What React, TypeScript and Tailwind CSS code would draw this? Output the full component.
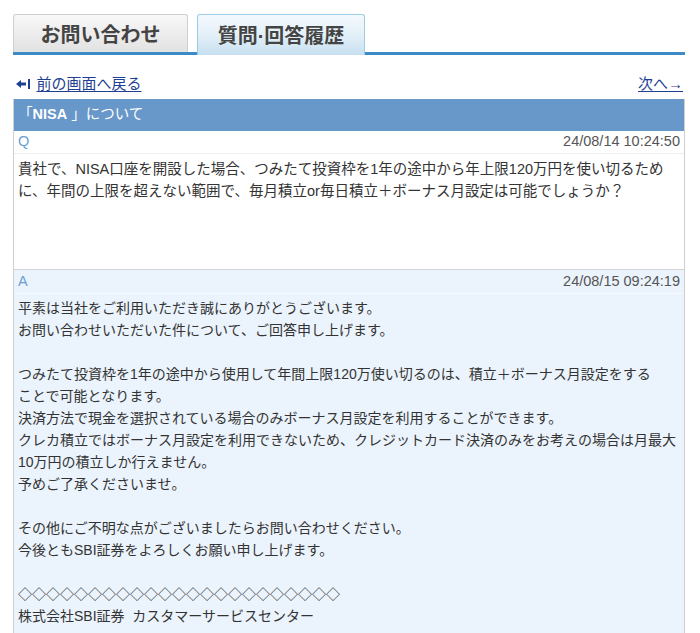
import { ReactNode } from 'react';

const font = "font-['Liberation_Sans','Noto_Sans_CJK_JP',sans-serif]";

function Tab({ label, active }: { label: string; active?: boolean }) {
  return active ? (
    <div className="relative z-10 -mb-[3px] ml-[9px] flex h-[41px] w-[168px] items-center justify-center rounded-t-[3px] border border-b-0 border-[#9ccbe6] bg-gradient-to-b from-[#f4f9fd] via-[#e3f0f8] to-[#c6dff0] pt-[2px] text-[20px] font-bold text-[#444]">
      {label}
    </div>
  ) : (
    <div className="flex h-[38px] w-[175px] items-center justify-center rounded-t-[3px] border border-b-0 border-[#cfcfcf] bg-gradient-to-b from-[#f8f8f8] to-[#e2e2e2] pt-[2px] text-[20px] font-bold text-[#444]">
      {label}
    </div>
  );
}

function Lines({ children }: { children: ReactNode }) {
  return <div className="whitespace-nowrap leading-[22px]">{children}</div>;
}

export default function App() {
  return (
    <div className={`${font} h-[633px] w-[700px] overflow-hidden bg-white text-[#333]`}>
      {/* Tabs */}
      <div className="ml-[13px] mr-[15px] mt-[14px] flex items-end border-b-[3px] border-[#3c8ac6]">
        <Tab label="お問い合わせ" />
        <Tab label="質問·回答履歴" active />
      </div>

      {/* Nav */}
      <div className="ml-[16px] mr-[17px] mt-[20px] flex items-center justify-between text-[15px] leading-[18px] text-[#1f3f94]">
        <a className="flex items-center gap-[7px]">
          <span className="flex items-center">
            <svg width="10" height="10" viewBox="0 0 10 10">
              <path d="M0 5 L5 1 L5 3.6 L10 3.6 L10 6.4 L5 6.4 L5 9 Z" fill="#1f3f94" />
            </svg>
            <span className="ml-[2px] h-[10px] w-[1.5px] bg-[#1f3f94]" />
          </span>
          <span className="underline underline-offset-2">前の画面へ戻る</span>
        </a>
        <a className="underline underline-offset-2">次へ→</a>
      </div>

      {/* Table */}
      <div className="ml-[13px] mr-[15px] mt-[6px] border-x border-[#cfcfcf]">
        <div className="flex h-[32px] items-center bg-[#6897c9] px-[4px] text-[14.5px] text-white">
          「<span className="font-bold">NISA</span>&nbsp;」について
        </div>

        {/* Q */}
        <div className="flex h-[23px] items-center justify-between border-b border-[#eeeeee] pl-[4px] pr-[4px] text-[14.5px]">
          <span className="text-[#6b9fd1]">Q</span>
          <span className="text-[#555]">24/08/14 10:24:50</span>
        </div>
        <div className="h-[115px] px-[4px] pt-[4px] text-[14.5px]">
          <Lines>
            貴社で、NISA口座を開設した場合、つみたて投資枠を1年の途中から年上限120万円を使い切るため
            <br />
            に、年間の上限を超えない範囲で、毎月積立or毎日積立＋ボーナス月設定は可能でしょうか？
          </Lines>
        </div>

        {/* A */}
        <div className="border-t border-[#d4d4d4] bg-[#ebf3fc]">
          <div className="flex h-[24px] items-center justify-between border-b border-[#f6f9fd] pl-[4px] pr-[4px] text-[14.5px]">
            <span className="text-[#6b9fd1]">A</span>
            <span className="text-[#555]">24/08/15 09:24:19</span>
          </div>
          <div className="px-[4px] pt-[3px] text-[14px]">
            <Lines>
              平素は当社をご利用いただき誠にありがとうございます。
              <br />
              お問い合わせいただいた件について、ご回答申し上げます。
              <br />
              <br />
              つみたて投資枠を1年の途中から使用して年間上限120万使い切るのは、積立＋ボーナス月設定をする
              <br />
              ことで可能となります。
              <br />
              決済方法で現金を選択されている場合のみボーナス月設定を利用することができます。
              <br />
              クレカ積立ではボーナス月設定を利用できないため、クレジットカード決済のみをお考えの場合は月最大
              <br />
              10万円の積立しか行えません。
              <br />
              予めご了承くださいませ。
              <br />
              <br />
              その他にご不明な点がございましたらお問い合わせください。
              <br />
              今後ともSBI証券をよろしくお願い申し上げます。
              <br />
              <br />
              ◇◇◇◇◇◇◇◇◇◇◇◇◇◇◇◇◇◇◇◇◇◇◇
              <br />
              株式会社SBI証券&nbsp;&nbsp;カスタマーサービスセンター
              <br />
              <br />
            </Lines>
          </div>
        </div>
      </div>
    </div>
  );
}
